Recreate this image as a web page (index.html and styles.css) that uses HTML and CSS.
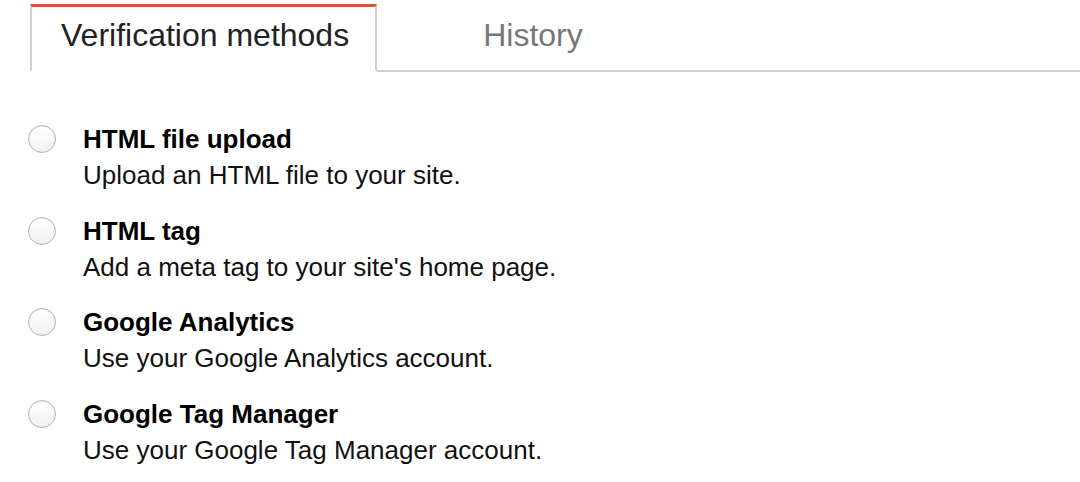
FILE: index.html
```html
<!DOCTYPE html>
<html lang="en">
<head>
    <meta charset="UTF-8">
    <title>Verification methods</title>
    <link rel="stylesheet" href="styles.css">
</head>
<body>
    <div class="tabs">
        <div class="tab active">Verification methods</div>
        <div class="tab">History</div>
        <div class="tab-fill"></div>
    </div>

    <div class="methods">
        <label class="method">
            <span class="radio"></span>
            <span class="method-text">
                <span class="method-title">HTML file upload</span>
                <span class="method-desc">Upload an HTML file to your site.</span>
            </span>
        </label>
        <label class="method">
            <span class="radio"></span>
            <span class="method-text">
                <span class="method-title">HTML tag</span>
                <span class="method-desc">Add a meta tag to your site's home page.</span>
            </span>
        </label>
        <label class="method">
            <span class="radio"></span>
            <span class="method-text">
                <span class="method-title">Google Analytics</span>
                <span class="method-desc">Use your Google Analytics account.</span>
            </span>
        </label>
        <label class="method">
            <span class="radio"></span>
            <span class="method-text">
                <span class="method-title">Google Tag Manager</span>
                <span class="method-desc">Use your Google Tag Manager account.</span>
            </span>
        </label>
    </div>
</body>
</html>
```

FILE: styles.css
```css
body {
    margin: 0;
    background: #fff;
    font-family: "Liberation Sans", Arial, sans-serif;
    color: #111;
}
.tabs {
    display: flex;
    padding-top: 4px;
}
.tab {
    font-size: 32px;
    line-height: 56px;
    padding: 3px 26px 7px 29px;
    border-bottom: 2px solid #cfcfcf;
    color: #777;
}
.tab.active {
    margin-left: 30px;
    padding-top: 0;
    border-top: 3px solid #d9533f;
    border-left: 2px solid #cfcfcf;
    border-right: 2px solid #cfcfcf;
    border-bottom-color: #fff;
    color: #222;
}
.tab:not(.active) {
    padding-left: 106px;
}
.tab-fill {
    flex: 1;
    border-bottom: 2px solid #cfcfcf;
}
.methods {
    margin-top: 49px;
    padding-left: 28px;
}
.method {
    display: flex;
    gap: 27px;
    margin-bottom: 19px;
}
.method:nth-child(odd) {
    margin-bottom: 20px;
}
.radio {
    flex: none;
    width: 26px;
    height: 26px;
    margin-top: 4px;
    border: 1px solid #b4b4b4;
    border-radius: 50%;
    background: linear-gradient(#fff, #f1f1f1);
    box-shadow: inset 0 1px 1px rgba(0,0,0,0.06);
}
.method-text {
    display: flex;
    flex-direction: column;
    font-size: 26px;
    line-height: 36px;
}
.method-title {
    font-weight: bold;
    color: #000;
}
```
